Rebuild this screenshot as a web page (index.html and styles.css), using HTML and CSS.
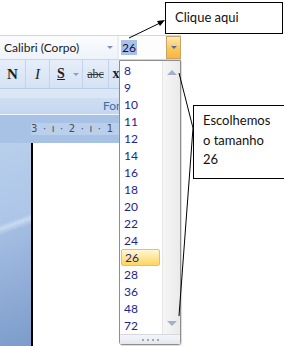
FILE: index.html
```html
<!DOCTYPE html>
<html>
<head>
<meta charset="utf-8">
<link rel="stylesheet" href="styles.css">
</head>
<body>
<div class="screen">
  <div class="topgap"></div>
  <div class="ribbon">
    <div class="row1">
      <div class="fontname"><span class="fname">Calibri (Corpo)</span><span class="tri"></span></div>
      <div class="fontsize"><span class="sel">26</span><span class="ddbtn"><span class="tri small"></span></span></div>
    </div>
    <div class="row2">
      <div class="btn b-n">N</div>
      <div class="btn b-i">I</div>
      <div class="btn b-s"><span class="u">S</span><span class="tri"></span></div>
      <div class="btn b-abc">abc</div>
      <div class="btn b-x">x</div>
    </div>
    <div class="row3"></div>
    <div class="grouplabel"><span class="glclip">Fonte</span></div>
  </div>
  <div class="rulerband"><div class="ruler">3 · ı · 2 · ı · 1 ·</div></div>
  <div class="doc"><div class="side"></div><div class="page"></div></div>
</div>

<div class="dropdown">
  <div class="dd-body">
    <ul class="items">
      <li>8</li><li>9</li><li>10</li><li>11</li><li>12</li><li>14</li><li>16</li><li>18</li>
      <li>20</li><li>22</li><li>24</li><li class="cur">26</li><li>28</li><li>36</li><li>48</li><li>72</li>
    </ul>
    <div class="scroll"><span class="up"></span><span class="down"></span></div>
  </div>
  <div class="grip"><span></span><span></span><span></span><span></span></div>
</div>

<div class="callout c1">Clique aqui</div>
<div class="callout c2">Escolhemos<br>o tamanho<br>26</div>

<svg class="lines" width="284" height="346" viewBox="0 0 284 346">
  <line x1="129" y1="38" x2="160" y2="23" stroke="#000" stroke-width="1"/>
  <polygon points="165,20 157,21 160,26" fill="#000"/>
  <line x1="179" y1="73" x2="193" y2="128" stroke="#000" stroke-width="1"/>
  <line x1="193" y1="128" x2="179" y2="316" stroke="#000" stroke-width="1"/>
</svg>
</body>
</html>
```
FILE: styles.css
```css
html, body { margin: 0; padding: 0; }
body {
  width: 284px;
  height: 346px;
  background: #fff;
  position: relative;
  overflow: hidden;
  font-family: Lato, "Liberation Sans", sans-serif;
}
.screen {
  width: 181px;
  display: flex;
  flex-direction: column;
}
.topgap { height: 35px; }
.ribbon { display: flex; flex-direction: column; }
.row1 {
  height: 23px;
  border-top: 1px solid #c8d8ee;
  background: #e7eef8;
  display: flex;
  gap: 2px;
}
.fontname {
  width: 117px;
  background: linear-gradient(#fbfcfe, #eef3fa);
  display: flex;
  align-items: center;
  justify-content: space-between;
  padding: 0 4px 0 4px;
  box-sizing: border-box;
  font-size: 12px;
  color: #1a1a1a;
}
.tri {
  width: 0; height: 0;
  border-left: 3px solid transparent;
  border-right: 3px solid transparent;
  border-top: 3px solid #7e93b6;
}
.fontsize {
  flex: 1;
  background: #fdfdfe;
  display: flex;
  align-items: stretch;
  justify-content: space-between;
  padding-left: 2px;
}
.sel {
  align-self: center;
  background: #a9c1e6;
  color: #10104a;
  font-size: 12px;
  line-height: 15px;
  padding: 0 1px;
}
.ddbtn {
  width: 13px;
  border: 1px solid #c3a56c;
  background: linear-gradient(#fde9b4, #fcc75a 55%, #fbb53a);
  display: flex;
  align-items: center;
  justify-content: center;
}
.tri.small { border-top-color: #4e6fa6; }
.row2 {
  height: 28px;
  border-top: 1px solid #c4d6ee;
  border-bottom: 1px solid #b9cce6;
  background: linear-gradient(#e6eef9, #d5e2f3);
  display: flex;
}
.btn {
  display: flex;
  align-items: center;
  justify-content: center;
  border-right: 1px solid #c3d4ea;
  color: #1e1e1e;
  font-family: "Liberation Serif", serif;
  font-size: 14px;
}
.b-n { width: 25px; font-weight: bold; font-size: 15px; }
.b-i { width: 23px; font-style: italic; font-size: 15px; }
.b-s { width: 33px; gap: 8px; font-weight: bold; padding-left: 4px; box-sizing: border-box; }
.b-s .u { text-decoration: underline; }
.b-s .tri { border-top-color: #8da0c2; }
.b-abc { width: 25px; font-size: 12px; text-decoration: line-through; color: #333; }
.b-x { width: 14px; border-right: none; font-weight: bold; }
.row3 { height: 9px; background: #dce7f5; }
.grouplabel {
  height: 16px;
  background: linear-gradient(#cfdff2, #c3d7ef);
  border-bottom: 1px solid #eef4fb;
  display: flex;
  align-items: center;
}
.glclip {
  margin-left: 103px;
  width: 16px;
  overflow: hidden;
  white-space: nowrap;
  font-size: 12px;
  line-height: 16px;
  color: #3d6aa8;
}
.rulerband {
  height: 28px;
  background: #a8c2e6;
  display: flex;
  align-items: center;
}
.ruler {
  margin-left: 31px;
  flex: 1;
  height: 12px;
  background: #b9cfec;
  font-family: "DejaVu Sans", sans-serif;
  font-size: 10px;
  letter-spacing: 1.2px;
  line-height: 12px;
  color: #4c4c4c;
  white-space: nowrap;
  overflow: hidden;
}
.doc { height: 204px; display: flex; }
.side {
  width: 31px;
  background: linear-gradient(160deg, #b8cfec 0%, #adc6e8 38%, #c8daf0 40%, #a3bde2 43%, #7c9bca 100%);
}
.page {
  flex: 1;
  border-left: 2px solid #000;
  background: #fff;
}

.dropdown {
  position: absolute;
  left: 119px;
  top: 60px;
  width: 60px;
  height: 283px;
  border: 1px solid #8e8e8e;
  border-radius: 0 0 3px 3px;
  background: #fff;
  display: flex;
  flex-direction: column;
  box-shadow: 1px 1px 1px rgba(0,0,0,0.15);
}
.dd-body { flex: 1; display: flex; }
.items {
  list-style: none;
  margin: 0;
  padding: 1px 0 0 0;
  flex: 1;
}
.items li {
  height: 17px;
  line-height: 17px;
  padding-left: 4px;
  font-size: 12px;
  color: #23238c;
  box-sizing: border-box;
}
.items li.cur {
  margin-left: 1px;
  width: 39px;
  padding-left: 3px;
  border: 1px solid #e1c26c;
  border-radius: 2px;
  line-height: 15px;
  background: linear-gradient(#fff6d2, #ffe69a 50%, #ffd45e);
}
.scroll {
  width: 17px;
  border-left: 1px solid #e6e6e6;
  background: linear-gradient(90deg, #f6f6f6, #eaeaea);
  display: flex;
  flex-direction: column;
  justify-content: space-between;
  align-items: center;
  padding: 9px 0 8px;
}
.up, .down {
  width: 0; height: 0;
  border-left: 5px solid transparent;
  border-right: 5px solid transparent;
}
.up { border-bottom: 5px solid #a4b0c9; }
.down { border-top: 5px solid #a4b0c9; }
.grip {
  height: 9px;
  border-top: 1px solid #d6d9de;
  background: linear-gradient(#f3f5f8, #e4e8ee);
  display: flex;
  justify-content: center;
  align-items: center;
  gap: 3px;
}
.grip span { width: 2px; height: 2px; background: #9aa8c0; }

.callout {
  position: absolute;
  background: #fff;
  border: 1px solid #000;
  box-sizing: border-box;
  font-family: Lato, "Liberation Sans", sans-serif;
  font-size: 13px;
  color: #111;
}
.c1 {
  left: 165px;
  top: 2px;
  width: 118px;
  height: 32px;
  padding: 6px 0 0 9px;
  line-height: 16px;
}
.c2 {
  left: 193px;
  top: 105px;
  width: 93px;
  height: 74px;
  padding: 5px 0 0 9px;
  line-height: 19.5px;
}
.lines { position: absolute; left: 0; top: 0; pointer-events: none; }
```
